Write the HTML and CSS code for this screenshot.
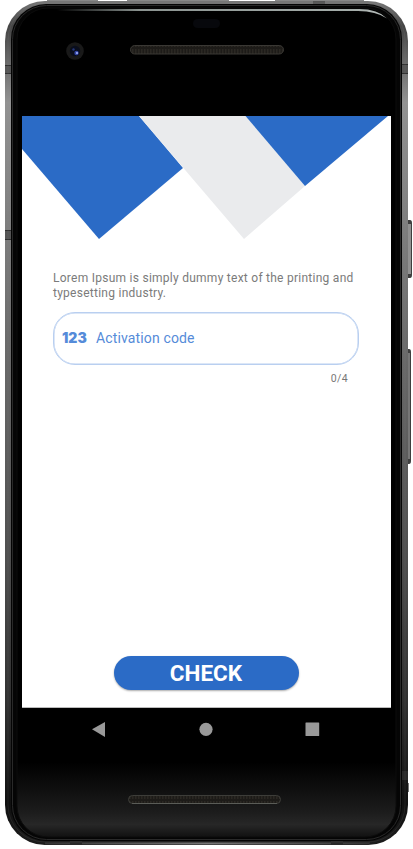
FILE: index.html
```html
<!DOCTYPE html>
<html lang="en">
<head>
<meta charset="utf-8">
<title>Activation</title>
<link rel="stylesheet" href="styles.css">
</head>
<body>
<main class="phone">
  <svg class="frame" viewBox="0 0 413 849" aria-hidden="true">
    <defs>
      <linearGradient id="metal" x1="0" y1="0" x2="0" y2="1">
        <stop offset="0" stop-color="#777"/><stop offset=".03" stop-color="#444"/><stop offset=".12" stop-color="#929292"/><stop offset=".4" stop-color="#6b6b6b"/><stop offset=".65" stop-color="#505050"/><stop offset=".83" stop-color="#303030"/><stop offset=".95" stop-color="#101010"/><stop offset="1" stop-color="#1c1c1c"/>
      </linearGradient>
      <linearGradient id="glass" x1="0" y1="0" x2="0" y2="1">
        <stop offset="0" stop-color="#000"/><stop offset=".91" stop-color="#000"/><stop offset=".97" stop-color="#1c1c1c"/><stop offset=".985" stop-color="#272727"/><stop offset="1" stop-color="#111"/>
      </linearGradient>
      <linearGradient id="shine">
        <stop offset="0" stop-color="#8b9390" stop-opacity="0"/><stop offset=".25" stop-color="#8b9390"/><stop offset=".9" stop-color="#a5adaa"/><stop offset="1" stop-color="#b8bebc"/>
      </linearGradient>
      <linearGradient id="bottomEdge" gradientUnits="userSpaceOnUse" x1="45" y1="0" x2="369" y2="0">
        <stop offset="0" stop-color="#333"/><stop offset=".5" stop-color="#777"/><stop offset="1" stop-color="#333"/>
      </linearGradient>
      <pattern id="mesh" width="3" height="8" patternUnits="userSpaceOnUse"><path fill="#1d1b18" d="M0 0h3v8H0z"/><path fill="#2b2823" d="M0 1h1.500v6H0z"/></pattern>
    </defs>
    <path fill="#3f3f3f" d="M406 220h4q2 0 2 3v52q0 3-2 3h-4z"/>
    <path fill="#919191" d="M408 224h3v50h-3z"/>
    <path fill="#3f3f3f" d="M406 349h3q2 0 2 3v109q0 3-2 3h-3z"/>
    <path fill="#777" d="M407.500 353h2.500v106h-2.500z"/>
    <path fill="#777" d="M407 783h2v9h-2z"/>
    <path fill="#888" d="M47 0h51v2H47zM127 0h102v2H127zM275 0h89v2h-89z"/>
    <rect x="5" y="1" width="403" height="844" rx="40" fill="url(#metal)"/>
    <path fill="none" stroke="url(#bottomEdge)" stroke-width="2" d="M45 843.500h324v.01"/>
    <path fill="#555" d="M5 65h7v9H5zM401 65h7v9h-7zM5 230h7v10H5zM313 1h12v3h-12z"/>
    <path stroke="#303030" d="M5 65.500h7M5 73.500h7M401 64.500h7M401 73.500h7M5 230.500h7M5 239.500h7"/>
    <path fill="#292929" d="M402 771h6v9h-6zM70 841h12v4H70zM331 841h12v4h-12z"/>
    <rect x="8" y="3" width="397" height="839" rx="37" fill="none" stroke="#aaa" stroke-opacity=".1"/>
    <rect x="11" y="4" width="391" height="837" rx="35" fill="#050505"/>
    <rect x="12.500" y="5.500" width="388" height="834" rx="34" fill="none" stroke="#292929"/>
    <rect x="17" y="8" width="379" height="829" rx="31" fill="url(#glass)" stroke="#0c0c0c"/>
    <path fill="url(#shine)" d="M57 9H359Q378 9 387 18.500Q376 11 358 11H57z"/>
    <rect x="193" y="19" width="27" height="9" rx="4.500" fill="#07080c"/>
    <circle cx="75" cy="51" r="8.800" fill="#191919"/><circle cx="75" cy="51" r="5.200" fill="#090d1c"/>
    <circle cx="73.500" cy="49.500" r="1.200" fill="#253677"/><circle cx="76.500" cy="53" r="2.200" fill="#3446a5"/><circle cx="77" cy="53" r="1" fill="#a9b8ff"/>
    <rect x="130.500" y="45.500" width="153" height="8.500" rx="4.250" fill="url(#mesh)" stroke="#3a3834"/>
    <rect x="128.500" y="795.500" width="152" height="8" rx="4" fill="url(#mesh)" stroke="#3d3d39"/>
    <path stroke="#62645f" stroke-width=".8" d="M132 803.500h145"/>
  </svg>
  <section class="screen">
    <svg class="banner" viewBox="0 0 369 123" aria-hidden="true">
      <path fill="#2b6bc6" d="M0 0h117l44 52-84 71L0 33z"/>
      <path fill="#eaebed" d="M117 0h107l59 70-61 53z"/>
      <path fill="#2b6bc6" d="M223.500 0H366l-83 70z"/>
    </svg>
    <form class="form">
      <p class="intro">Lorem Ipsum is simply dummy text of the printing and<br>typesetting industry.</p>
      <div class="field"><span class="digits">123</span><span class="label">Activation code</span></div>
      <div class="counter">0/4</div>
      <button class="check" type="button">CHECK</button>
    </form>
  </section>
  <nav class="nav">
    <svg viewBox="0 0 369 42" aria-hidden="true"><g fill="#999"><path d="M70 21.200L83 14v15z"/><circle cx="184" cy="21.300" r="6.600"/><rect x="283.500" y="14.500" width="13.700" height="13.500" rx=".5"/></g></svg>
  </nav>
</main>
</body>
</html>
```
FILE: styles.css
```css
* {
  box-sizing: border-box;
}

body {
  margin: 0;
  background: #fff;
  font-family: Roboto, sans-serif;
}

.phone {
  position: relative;
  width: 413px;
  height: 849px;
  padding: 116px 22px 0;
  overflow: hidden;
}

.frame {
  position: absolute;
  inset: 0;
  width: 413px;
  height: 849px;
}

.screen {
  position: relative;
  display: flex;
  flex-direction: column;
  height: 592px;
  background: #fff;
  border-bottom: 1px solid #bbb;
}

.banner {
  display: block;
  width: 369px;
  height: 123px;
}

.form {
  display: flex;
  flex: 1;
  flex-direction: column;
  padding: 32px 32px 17px 31px;
}

.intro {
  margin: 0;
  color: #7b7b7b;
  font-size: 12px;
  line-height: 14.500px;
  letter-spacing: 0.26px;
  white-space: nowrap;
}

.field {
  display: flex;
  align-items: center;
  gap: 9px;
  height: 53px;
  margin-top: 12px;
  padding: 0 8px 2px;
  border: 1.500px solid #b9cff0;
  border-radius: 22px;
  box-shadow: inset 0 0 0 0.5px #b9cff0;
  color: #558bd9;
}

.digits {
  width: 25px;
  font: 900 14px/16px Inter, sans-serif;
}

.label {
  font-size: 14px;
  letter-spacing: 0.14px;
}

.counter {
  margin: 7px 11px 0 0;
  color: #777;
  font-size: 10.500px;
  line-height: 13px;
  letter-spacing: 0.4px;
  text-align: right;
}

.check {
  width: 185px;
  height: 34px;
  margin: auto 0 0 61px;
  padding: 0 1px 0 0;
  border: 0;
  border-radius: 17px;
  background: #2b6bc6;
  box-shadow: 0 1px 2px #0005;
  color: #fff;
  font: 700 22.500px/34px Roboto, sans-serif;
}

.nav {
  position: relative;
  height: 42px;
}

.nav svg {
  display: block;
}
```
